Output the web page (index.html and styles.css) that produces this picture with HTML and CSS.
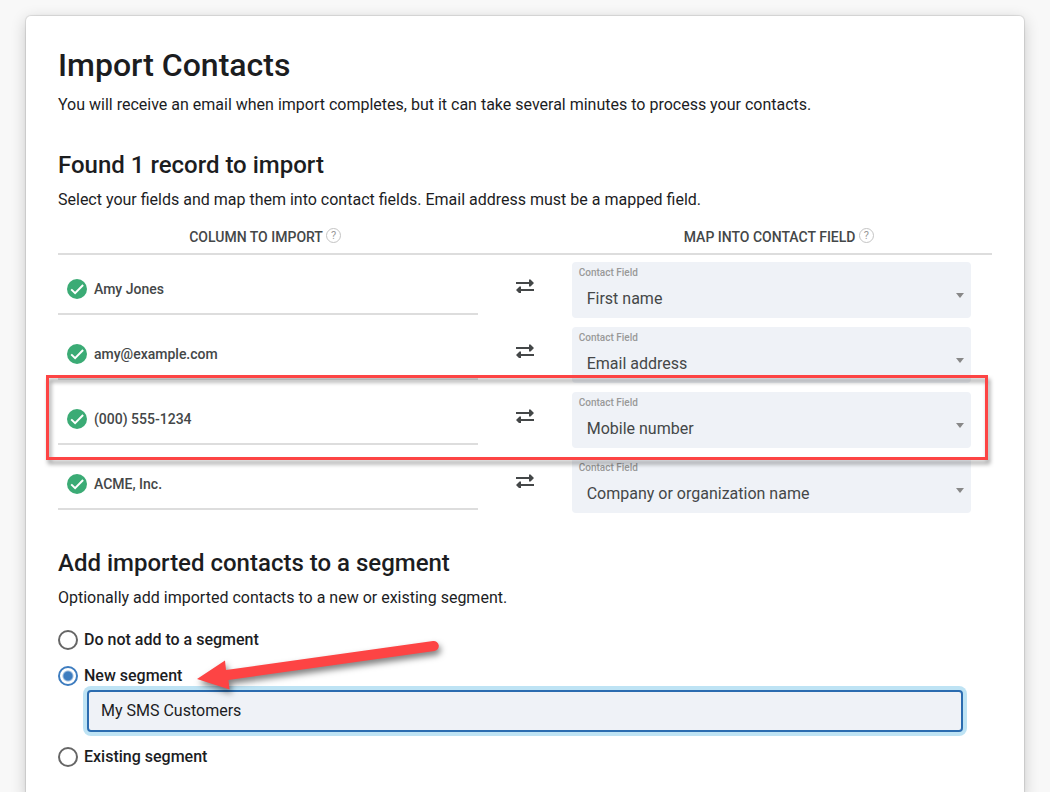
FILE: index.html
```html
<!DOCTYPE html>
<html lang="en">
<head>
<meta charset="utf-8">
<title>Import Contacts</title>
<link rel="stylesheet" href="styles.css">
</head>
<body>
<svg class="sprite" aria-hidden="true">
  <symbol id="check" viewBox="0 0 20 20"><circle cx="10" cy="10" r="10" fill="#3bab75"/><path d="M4.200 10.400l3.900 3.800 8-8.200" fill="none" stroke="#fff" stroke-width="2"/></symbol>
  <symbol id="swap" viewBox="0 0 20 14"><path d="M1 4h15M4 11h15" stroke="#444748" stroke-width="2" fill="none"/><path d="M14 .5h1.500L19 4l-3.500 3.500H14zM6 7.500H4.500L1 11l3.500 3.500H6z" fill="#444748"/></symbol>
</svg>
<main class="card">
  <h1 class="title">Import Contacts</h1>
  <p class="text">You will receive an email when import completes, but it can take several minutes to process your contacts.</p>

  <section class="section">
    <h2 class="heading">Found 1 record to import</h2>
    <p class="text">Select your fields and map them into contact fields. Email address must be a mapped field.</p>
    <table class="map">
      <thead>
        <tr>
          <th class="map-side">COLUMN TO IMPORT <button class="help" type="button">?</button></th>
          <th class="map-mid"></th>
          <th class="map-side">MAP INTO CONTACT FIELD <button class="help" type="button">?</button></th>
        </tr>
      </thead>
      <tbody>
        <tr>
          <td><div class="source"><svg class="check"><use href="#check"/></svg>Amy Jones</div></td>
          <td class="swap-cell"><svg class="swap"><use href="#swap"/></svg></td>
          <td><div class="field"><label class="field-label" for="f1">Contact Field</label><select class="field-select" id="f1"><option>First name</option></select></div></td>
        </tr>
        <tr>
          <td><div class="source"><svg class="check"><use href="#check"/></svg>amy@example.com</div></td>
          <td class="swap-cell"><svg class="swap"><use href="#swap"/></svg></td>
          <td><div class="field"><label class="field-label" for="f2">Contact Field</label><select class="field-select" id="f2"><option>Email address</option></select></div></td>
        </tr>
        <tr class="highlighted">
          <td><div class="source"><svg class="check"><use href="#check"/></svg>(000) 555-1234</div></td>
          <td class="swap-cell"><svg class="swap"><use href="#swap"/></svg></td>
          <td><div class="field"><label class="field-label" for="f3">Contact Field</label><select class="field-select" id="f3"><option>Mobile number</option></select></div><div class="highlight"></div></td>
        </tr>
        <tr>
          <td><div class="source"><svg class="check"><use href="#check"/></svg>ACME, Inc.</div></td>
          <td class="swap-cell"><svg class="swap"><use href="#swap"/></svg></td>
          <td><div class="field"><label class="field-label" for="f4">Contact Field</label><select class="field-select" id="f4"><option>Company or organization name</option></select></div></td>
        </tr>
      </tbody>
    </table>
  </section>

  <section class="section">
    <h2 class="heading">Add imported contacts to a segment</h2>
    <p class="text">Optionally add imported contacts to a new or existing segment.</p>
    <div class="choices">
      <label class="choice"><input class="radio" type="radio" name="segment">Do not add to a segment</label>
      <div class="new-segment">
        <label class="choice"><input class="radio" type="radio" name="segment" checked>New segment</label>
        <input class="segment-name" type="text" aria-label="Segment name" value="My SMS Customers">
        <svg class="pointer" viewBox="0 0 250 60" aria-hidden="true"><path d="M5 29L33 10.500L34 20L241 -9A5 5 0 0 1 242.500 1L36.500 30L37.500 39.500Z" fill="#fd4444"/></svg>
      </div>
      <label class="choice"><input class="radio" type="radio" name="segment">Existing segment</label>
    </div>
  </section>
</main>
</body>
</html>
```
FILE: styles.css
```css
* { box-sizing: border-box; }

body {
  margin: 0;
  padding: 16px 26px 32px;
  background: #f8f8f8;
  color: #1c1d1f;
  font-family: Roboto, "Liberation Sans", sans-serif;
  font-size: 16px;
  line-height: 24px;
}

.sprite { position: absolute; width: 0; height: 0; }

.card {
  padding: 29px 32px;
  background: #fff;
  border-radius: 5px;
  box-shadow: 0 0 1px 1px rgba(0, 0, 0, .1), 0 4px 16px rgba(0, 0, 0, .2);
}

.title, .heading, .text { margin: 0; }
.title { font-size: 32px; line-height: 40px; font-weight: 500; }
.heading { font-size: 24px; line-height: 32px; font-weight: 500; }
.text { margin-top: 8px; }
.heading + .text { margin-top: 7px; }
.section { margin-top: 32px; }

.map {
  width: 100%;
  border-collapse: separate;
  border-spacing: 0;
  table-layout: fixed;
}
.map th {
  height: 43px;
  padding: 8px 6px 0 0;
  border-bottom: 2px solid #ddd;
  color: #444748;
  font-size: 14px;
  font-weight: 500;
}
.map td { height: 65px; padding: 0; vertical-align: top; }
.map-side { width: 45%; }
.map-mid { width: 10%; }

.help {
  width: 15px;
  height: 15px;
  padding: 0;
  border: 1px solid #c4c4c4;
  border-radius: 50%;
  background: none;
  color: #999;
  font: 11px/13px Roboto, sans-serif;
  vertical-align: 3px;
}

.source {
  display: flex;
  align-items: center;
  gap: 7px;
  height: 60px;
  padding: 10px 9px 0;
  border-bottom: 2px solid #ddd;
  color: #444748;
  font-size: 14px;
  font-weight: 500;
}
.check { width: 20px; height: 20px; }
.map .swap-cell { padding-top: 24px; text-align: center; line-height: 0; }
.swap { width: 20px; height: 14px; overflow: visible; }

.field {
  position: relative;
  display: flex;
  flex-direction: column;
  width: 95%;
  height: 56px;
  margin-top: 7px;
  border-radius: 4px;
  background: #eff2f7;
}
.field::after {
  content: "";
  position: absolute;
  right: 7px;
  top: 31px;
  border: 4px solid transparent;
  border-top: 5px solid #888;
  border-bottom: 0;
  pointer-events: none;
}
.field-label {
  padding: 3px 7px 0;
  color: #999;
  font-size: 10px;
  font-weight: 500;
  line-height: 16px;
}
.field-select {
  flex: 1;
  appearance: none;
  padding: 0 15px 2px;
  border: 0;
  background: none;
  color: #444748;
  font: inherit;
}

.highlighted { position: relative; z-index: 1; }
.highlight {
  position: absolute;
  inset: -10px 4px -10px -12px;
  border: 3px solid #fd4444;
  filter: drop-shadow(2px 4px 2px rgba(0, 0, 0, .4));
  pointer-events: none;
}

.choices {
  display: flex;
  flex-direction: column;
  gap: 12px;
  margin-top: 18px;
}
.choice {
  display: flex;
  align-items: center;
  gap: 6px;
  font-weight: 500;
}
.radio {
  appearance: none;
  width: 20px;
  height: 20px;
  margin: 0;
  border: 2px solid #666;
  border-radius: 50%;
}
.radio:checked {
  border-color: #3d7cbf;
  background: radial-gradient(circle, #3d7cbf 4px, transparent 6px);
}

.new-segment { position: relative; padding: 0 29px 1px; }
.new-segment .choice { margin-left: -29px; }
.segment-name {
  display: block;
  width: 100%;
  height: 42px;
  margin-top: 2px;
  padding: 0 12px 2px;
  border: 2px solid #2b6cb0;
  border-radius: 4px;
  outline: 0;
  box-shadow: 0 0 0 4px #bee3f4;
  background: #eff2f7;
  color: #1c1d1f;
  font: inherit;
}
.pointer {
  position: absolute;
  left: 134px;
  top: -14px;
  width: 250px;
  height: 60px;
  overflow: visible;
  filter: drop-shadow(2px 4px 3px rgba(0, 0, 0, .5));
  pointer-events: none;
}
```
